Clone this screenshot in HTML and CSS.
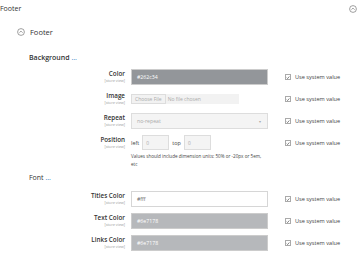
FILE: index.html
```html
<!DOCTYPE html>
<html>
<head>
<meta charset="utf-8">
<link rel="stylesheet" href="styles.css">
</head>
<body>
<div class="section-head">
  <span class="section-title">Footer</span>
  <svg class="circ" width="8" height="8" viewBox="0 0 8 8"><circle cx="4" cy="4" r="3.4" fill="none" stroke="#777" stroke-width="0.7"/><path d="M2.4 4.7 L4 3.1 L5.6 4.7" fill="none" stroke="#777" stroke-width="0.7"/></svg>
</div>
<div class="group-head">
  <svg class="circ" width="8" height="8" viewBox="0 0 8 8"><circle cx="4" cy="4" r="3.4" fill="none" stroke="#777" stroke-width="0.7"/><path d="M2.4 4.7 L4 3.1 L5.6 4.7" fill="none" stroke="#777" stroke-width="0.7"/></svg>
  <span class="group-title">Footer</span>
</div>

<div class="fs-title">Background <span class="dots">...</span></div>

<div class="row">
  <div class="label"><div class="lt">Color</div><div class="scope">[store view]</div></div>
  <div class="ctrl"><div class="input disabled dark">#262c34</div></div>
  <label class="use"><span class="cb"><svg width="5" height="5" viewBox="0 0 5 5"><path d="M0.8 2.6 L2 3.8 L4.2 1.2" fill="none" stroke="#444" stroke-width="0.8"/></svg></span>Use system value</label>
</div>

<div class="row">
  <div class="label"><div class="lt">Image</div><div class="scope">[store view]</div></div>
  <div class="ctrl"><div class="file"><span class="fbtn">Choose File</span><span class="fname">No file chosen</span></div></div>
  <label class="use"><span class="cb"><svg width="5" height="5" viewBox="0 0 5 5"><path d="M0.8 2.6 L2 3.8 L4.2 1.2" fill="none" stroke="#444" stroke-width="0.8"/></svg></span>Use system value</label>
</div>

<div class="row">
  <div class="label"><div class="lt">Repeat</div><div class="scope">[store view]</div></div>
  <div class="ctrl"><div class="input select">no-repeat<span class="arr">▾</span></div></div>
  <label class="use"><span class="cb"><svg width="5" height="5" viewBox="0 0 5 5"><path d="M0.8 2.6 L2 3.8 L4.2 1.2" fill="none" stroke="#444" stroke-width="0.8"/></svg></span>Use system value</label>
</div>

<div class="row">
  <div class="label"><div class="lt">Position</div><div class="scope">[store view]</div></div>
  <div class="ctrl">
    <div class="pos"><span>left</span><span class="input small">0</span><span>top</span><span class="input small">0</span></div>
    <div class="note">Values should include dimension units: 50% or -20px or 5em, etc</div>
  </div>
  <label class="use"><span class="cb"><svg width="5" height="5" viewBox="0 0 5 5"><path d="M0.8 2.6 L2 3.8 L4.2 1.2" fill="none" stroke="#444" stroke-width="0.8"/></svg></span>Use system value</label>
</div>

<div class="fs-title font">Font <span class="dots">...</span></div>

<div class="row">
  <div class="label"><div class="lt">Titles Color</div><div class="scope">[store view]</div></div>
  <div class="ctrl"><div class="input white">#fff</div></div>
  <label class="use"><span class="cb"><svg width="5" height="5" viewBox="0 0 5 5"><path d="M0.8 2.6 L2 3.8 L4.2 1.2" fill="none" stroke="#444" stroke-width="0.8"/></svg></span>Use system value</label>
</div>

<div class="row">
  <div class="label"><div class="lt">Text Color</div><div class="scope">[store view]</div></div>
  <div class="ctrl"><div class="input disabled mid">#6e7178</div></div>
  <label class="use"><span class="cb"><svg width="5" height="5" viewBox="0 0 5 5"><path d="M0.8 2.6 L2 3.8 L4.2 1.2" fill="none" stroke="#444" stroke-width="0.8"/></svg></span>Use system value</label>
</div>

<div class="row">
  <div class="label"><div class="lt">Links Color</div><div class="scope">[store view]</div></div>
  <div class="ctrl"><div class="input disabled mid">#6e7178</div></div>
  <label class="use"><span class="cb"><svg width="5" height="5" viewBox="0 0 5 5"><path d="M0.8 2.6 L2 3.8 L4.2 1.2" fill="none" stroke="#444" stroke-width="0.8"/></svg></span>Use system value</label>
</div>
</body>
</html>
```
FILE: styles.css
```css
* { box-sizing: border-box; }
body {
  margin: 0;
  background: #fff;
  font-family: "Open Sans", "Liberation Sans", sans-serif;
  color: #303030;
  width: 360px;
  height: 256px;
  overflow: hidden;
}
.section-head {
  display: flex;
  justify-content: space-between;
  align-items: center;
  padding: 4px 3px 0 0;
  height: 13px;
}
.section-title { font-size: 7px; color: #333; line-height: 9px; }
.circ { display: block; }
.group-head {
  display: flex;
  align-items: center;
  gap: 5px;
  padding-left: 17px;
  margin-top: 14px;
  height: 10px;
}
.group-title { font-size: 7.5px; color: #333; }
.fs-title {
  padding-left: 29px;
  margin-top: 16px;
  font-size: 7px;
  font-weight: 600;
  color: #333;
  height: 10px;
  line-height: 10px;
}
.fs-title.font { margin-top: 5px; font-weight: 400; }
.dots { color: #1979c3; font-weight: 400; }
.row {
  display: grid;
  grid-template-columns: 125px 137px auto;
  column-gap: 6px;
  align-items: start;
}
.row + .row { margin-top: 6px; }
.fs-title + .row { margin-top: 6px; }
.fs-title.font + .row { margin-top: 8px; }
.label { text-align: right; padding-top: 1px; }
.lt { font-size: 6.3px; font-weight: 600; color: #333; line-height: 8px; }
.scope { font-size: 3.8px; color: #999; line-height: 5px; }
.ctrl { min-height: 16px; }
.input {
  height: 16px;
  border: 0.5px solid #adadad;
  font-size: 5.2px;
  line-height: 15px;
  padding-left: 5px;
  color: #303030;
}
.input.disabled { color: #fff; border-color: #ccc; }
.input.dark { background: #93969a; }
.input.mid { background: #b6b8bb; }
.input.white { background: #fff; border-color: #d6d6d6; color: #666; }
.input.select {
  background: #f4f4f4;
  border-color: #ddd;
  color: #aaa;
  position: relative;
}
.arr { position: absolute; right: 6px; top: 0; font-size: 4px; color: #aaa; }
.file {
  display: flex;
  align-items: center;
  height: 16px;
}
.fbtn {
  background: #f2f2f2;
  border: 0.5px solid #ddd;
  font-size: 5px;
  color: #aaa;
  height: 10px;
  line-height: 9px;
  padding: 0 3px;
}
.fname {
  background: #f2f2f2;
  font-size: 5px;
  color: #aaa;
  height: 10px;
  line-height: 10px;
  width: 73px;
  padding-left: 2px;
}
.pos { display: flex; align-items: center; gap: 3px; font-size: 5.5px; color: #444; }
.input.small {
  width: 27px;
  height: 15px;
  background: #f4f4f4;
  border-color: #ddd;
  color: #aaa;
  font-size: 4.8px;
  line-height: 14px;
  padding-left: 3px;
}
.note { font-size: 4.6px; color: #444; line-height: 8px; margin-top: 2px; padding-right: 1px; }
.use {
  display: flex;
  align-items: center;
  gap: 4px;
  font-size: 5.6px;
  color: #444;
  padding-left: 11px;
  height: 16px;
}
.cb {
  width: 6px;
  height: 6px;
  border: 0.5px solid #aaa;
  display: flex;
  align-items: center;
  justify-content: center;
  background: #fff;
}
```
